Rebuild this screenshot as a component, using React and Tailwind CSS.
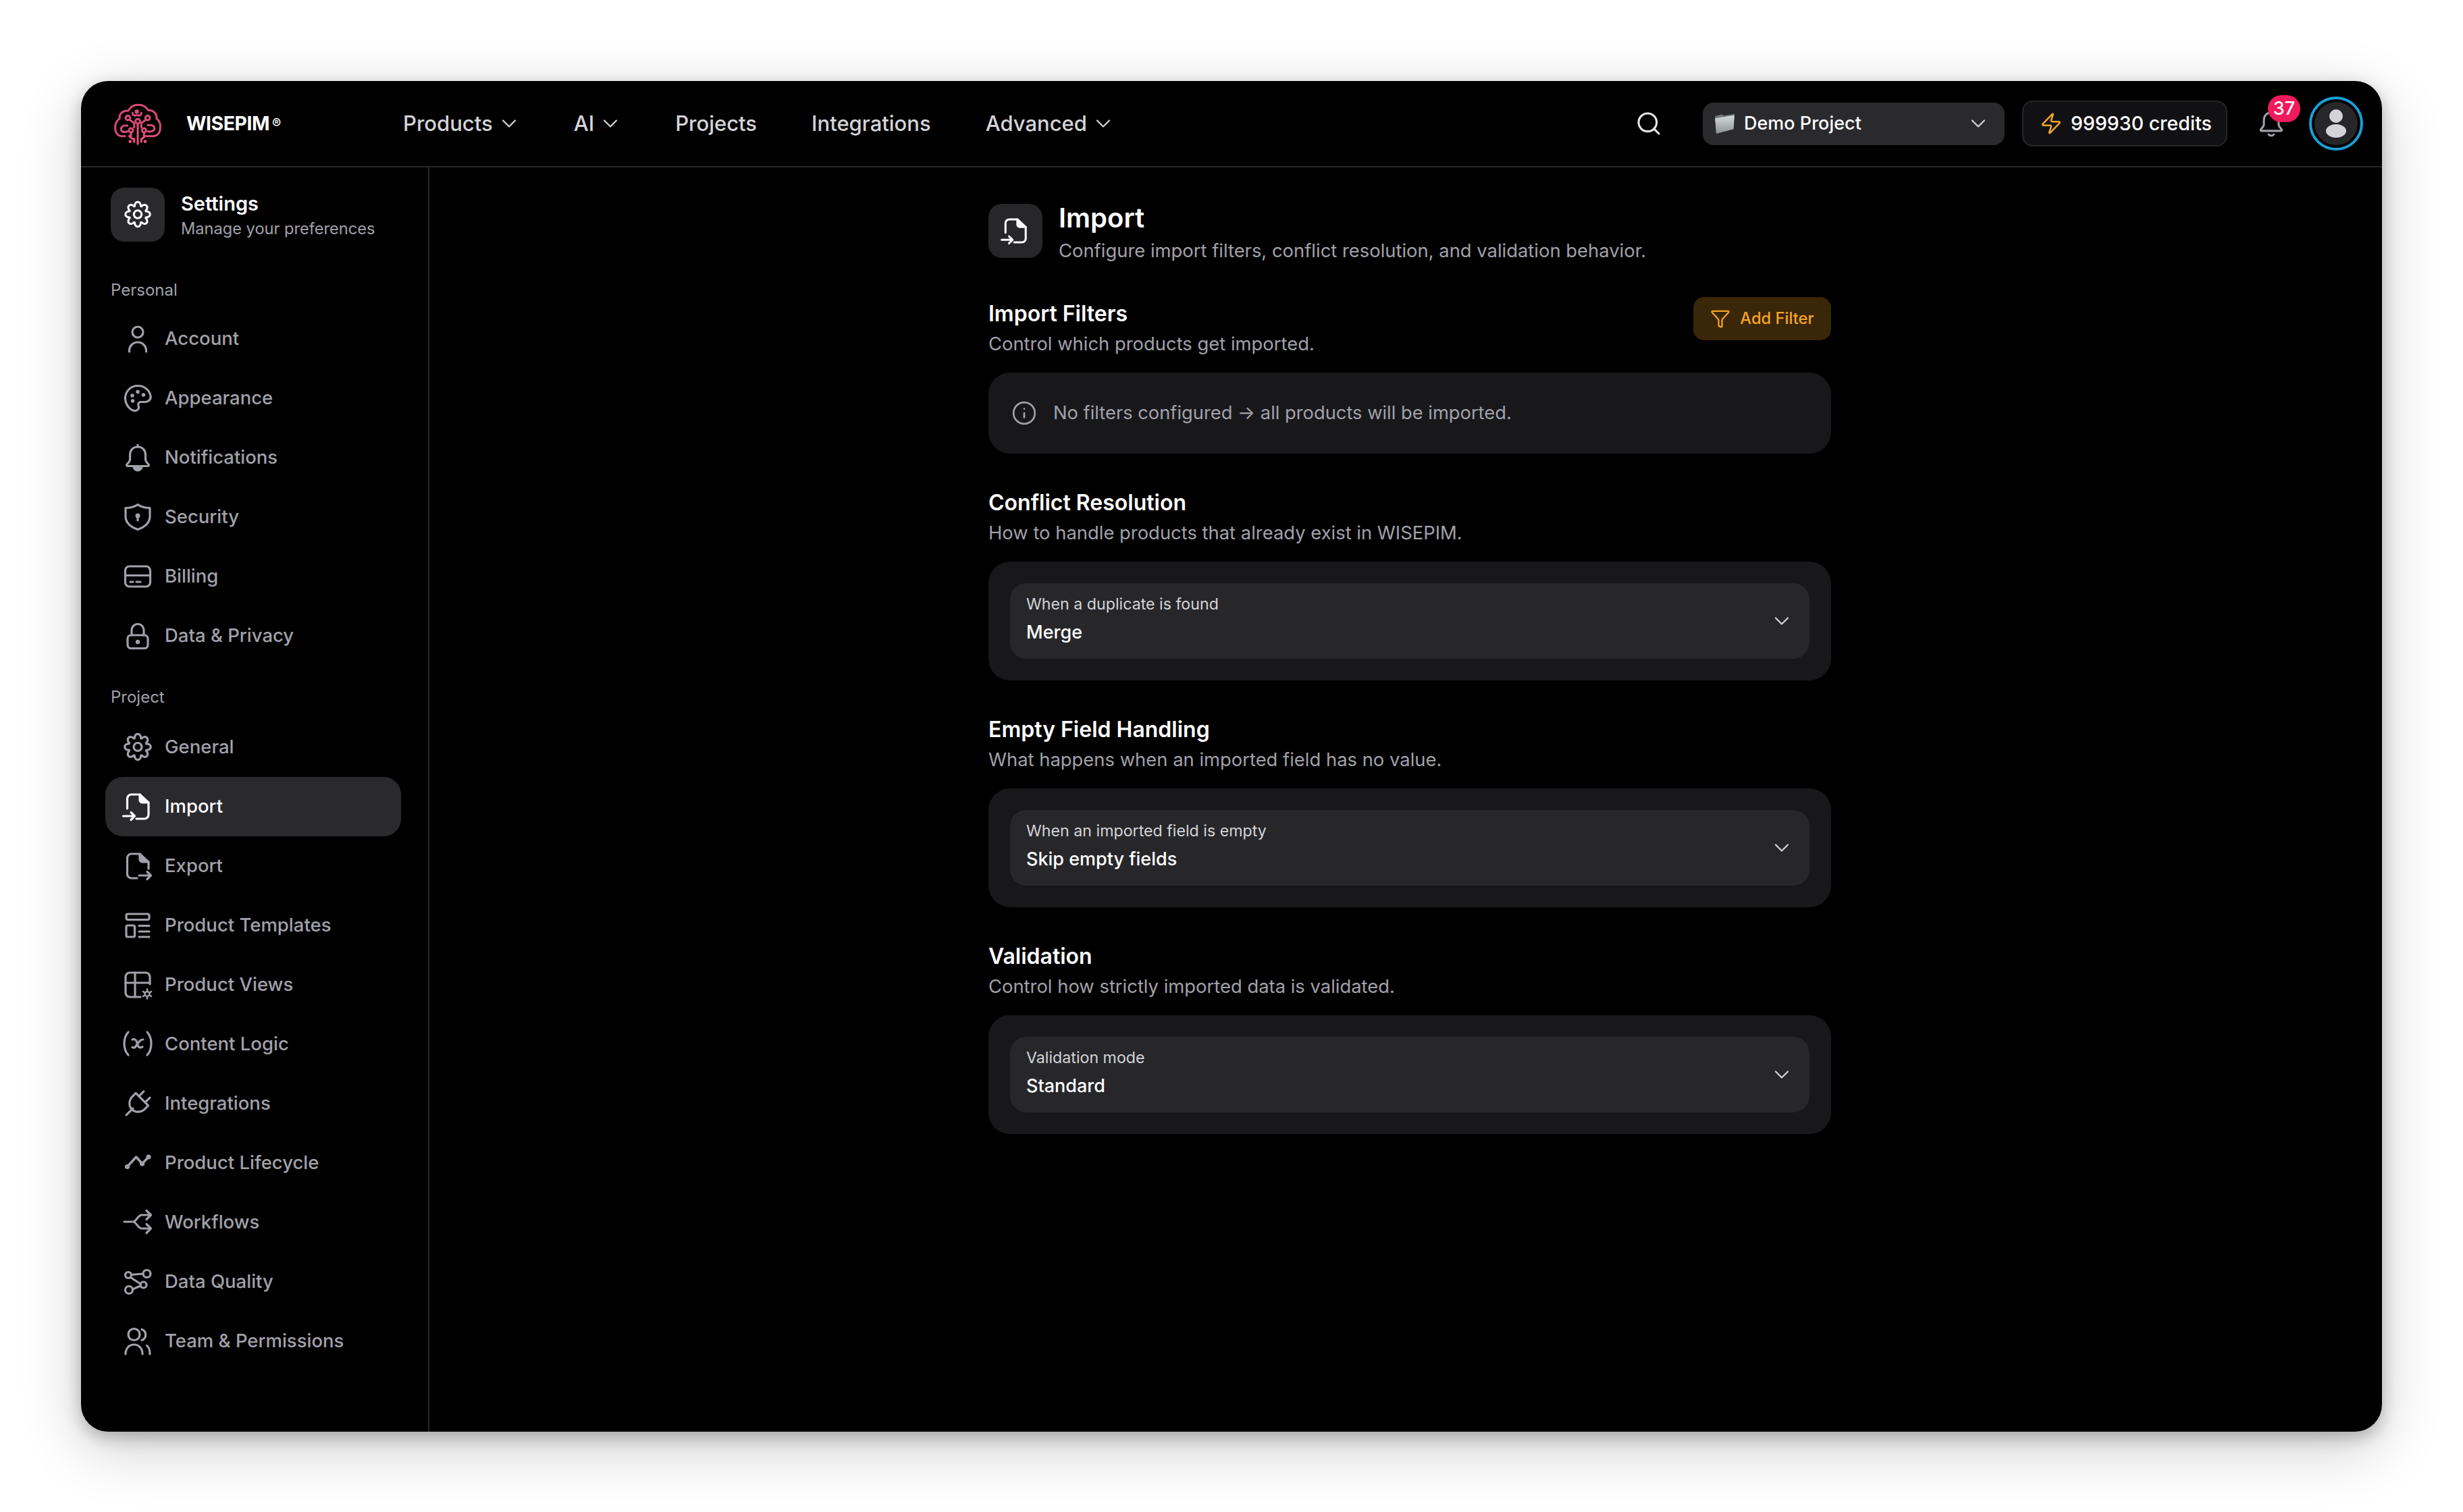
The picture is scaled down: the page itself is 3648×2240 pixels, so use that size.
import { ChevronDown, Search, Zap, Funnel, Info } from 'lucide-react';

// every sidebar icon sits in a 40x40 box, strokes are about 3px like the reference
function NavIcon({ children, className = '' }) {
  return (
    <svg
      viewBox="0 0 40 40"
      fill="none"
      stroke="currentColor"
      strokeWidth="3.2"
      strokeLinecap="round"
      strokeLinejoin="round"
      className={`w-10 h-10 shrink-0 overflow-visible ${className}`}
      aria-hidden="true"
    >
      {children}
    </svg>
  );
}

function GearIcon({ className = '' }) {
  // cog with eight stubby teeth
  const n = 8;
  const cx = 20;
  const cy = 19.5;
  const step = Math.PI / n;
  const p = (r, t) => `${(cx + r * Math.cos(t)).toFixed(1)} ${(cy + r * Math.sin(t)).toFixed(1)}`;
  let d = '';
  for (let i = 0; i < n; i++) {
    const a = (i / n) * Math.PI * 2 - Math.PI / 2;
    d += `${i === 0 ? 'M' : 'L'}${p(13.6, a - step * 0.9)} C${p(17, a - step * 0.75)} ${p(19.6, a - step * 0.35)} ${p(19.2, a)} C${p(19.6, a + step * 0.35)} ${p(17, a + step * 0.75)} ${p(13.6, a + step * 0.9)} `;
  }
  d += 'Z';
  return (
    <NavIcon className={className}>
      <path d={d} />
      <circle cx="20" cy="19.5" r="6" />
    </NavIcon>
  );
}

function ImportIcon({ className = '' }) {
  return (
    <NavIcon className={className}>
      <path d="M4.5 23V8a6 6 0 0 1 6-6H23L36 14V32a6 6 0 0 1-6 6H18" />
      <path d="M23 2v8a4 4 0 0 0 4 4H36" fill="currentColor" />
      <path d="M-1.5 34H15M10 28.5L15.5 34L10 39.5" />
    </NavIcon>
  );
}

const icons = {
  account: (
    <NavIcon>
      <circle cx="20" cy="10" r="8" />
      <path d="M7.5 39v-1.5a12.5 12.5 0 0 1 25 0V39" />
    </NavIcon>
  ),
  appearance: (
    <NavIcon>
      <path d="M20 1.5C9.5 1.5 1.5 10 1.5 20S9.5 38.5 16 38.5c3.5 0 5.5-2.5 5.5-5 0-1.5-.8-2.5-.8-4 0-2.5 2-4 4.5-4h5.5c4.5 0 8.5-3 8.5-7.5C38.5 9 30.5 1.5 20 1.5Z" />
      <circle cx="12" cy="16" r="2.8" fill="currentColor" stroke="none" />
      <circle cx="20" cy="10.5" r="2.8" fill="currentColor" stroke="none" />
      <circle cx="28.5" cy="15" r="2.8" fill="currentColor" stroke="none" />
      <circle cx="12.5" cy="24" r="2.8" fill="currentColor" stroke="none" />
    </NavIcon>
  ),
  notifications: (
    <NavIcon>
      <path d="M20 4C13 4 8.5 9 8.5 16v7c0 2.5-2.5 4.5-4.5 7-1 1.2-.5 2.5 1 2.5h30c1.5 0 2-1.3 1-2.5-2-2.5-4.5-4.5-4.5-7v-7C31.5 9 27 4 20 4Z" />
      <path d="M20 1v3" />
      <path d="M14 33a6 6 0 0 0 12 0Z" fill="currentColor" />
    </NavIcon>
  ),
  security: (
    <NavIcon>
      <path d="M20 1.5C25 5 31 6.5 38 6.5V19C38 30 28 36 20 38.5 12 36 2 30 2 19V6.5C9 6.5 15 5 20 1.5Z" />
      <circle cx="20" cy="18" r="3.5" fill="currentColor" stroke="none" />
      <path d="M20 19v6" />
    </NavIcon>
  ),
  billing: (
    <NavIcon>
      <rect x="1.5" y="5" width="37" height="30" rx="6" />
      <path d="M1.5 18.5h37M9 28h4M18 28h6" />
    </NavIcon>
  ),
  privacy: (
    <NavIcon>
      <rect x="5" y="19" width="30" height="19.5" rx="5" />
      <path d="M11 19v-7.5a9 9 0 0 1 18 0V19" />
      <circle cx="20" cy="29" r="3.2" fill="currentColor" stroke="none" />
    </NavIcon>
  ),
  general: <GearIcon />,
  import: <ImportIcon />,
  export: (
    <NavIcon>
      <path d="M36 24V14L23 2H10.5a6 6 0 0 0-6 6V32a6 6 0 0 0 6 6H19" />
      <path d="M23 2v8a4 4 0 0 0 4 4H36" fill="currentColor" />
      <path d="M22 34H39M34 28.5L39.5 34L34 39.5" />
    </NavIcon>
  ),
  templates: (
    <NavIcon>
      <rect x="3" y="3" width="34" height="8.5" rx="2.5" />
      <rect x="3" y="20" width="12.5" height="17" rx="2" />
      <path d="M22 20.5H37M22 29H37M22 37H37" />
    </NavIcon>
  ),
  views: (
    <NavIcon>
      <path d="M38 19V8a6 6 0 0 0-6-6H8a6 6 0 0 0-6 6V32a6 6 0 0 0 6 6H24" />
      <path d="M2 17H38M16 2V38" />
      <circle cx="34" cy="33.5" r="3.5" strokeWidth="2.5" />
      <path d="M34 26.5v2M34 38.5v2M27.9 30l1.7 1M38.4 36l1.7 1M27.9 37l1.7-1M38.4 31l1.7-1" strokeWidth="2.5" />
    </NavIcon>
  ),
  logic: (
    <NavIcon>
      <path d="M6 2C1.5 7 0 12.5 0 19s1.5 12 6 17M34 2C38.5 7 40 12.5 40 19s-1.5 12-6 17" />
      <path d="M12 13c3.5-1 5.5 0 6.5 3.5l1.5 5c1 3.5 3.5 4 7 2.5M28 13c-3.5 0-5 2-8 6l-3.5 5c-1.5 1.5-3 1.5-4.5.5" />
    </NavIcon>
  ),
  integrations: (
    <NavIcon>
      <g transform="rotate(45 20 20)">
        <path d="M20 30V44" />
        <path d="M13.5 11V1M26.5 11V1" />
        <path d="M7 11H33V18A11 12 0 0 1 7 18Z" />
      </g>
    </NavIcon>
  ),
  lifecycle: (
    <NavIcon>
      <path d="M4.5 25.5L17.7 11L26.6 21L36 11" strokeWidth="3.5" />
      <circle cx="4.5" cy="25.5" r="3.6" fill="currentColor" stroke="none" />
      <circle cx="26.6" cy="21" r="3.6" fill="currentColor" stroke="none" />
      <circle cx="36" cy="11" r="3.6" fill="currentColor" stroke="none" />
    </NavIcon>
  ),
  workflows: (
    <NavIcon>
      <path d="M0 19H13C18 19 20 9 26 9H39M13 19C18 19 20 29 26 29H39" />
      <path d="M33 2.5L39.5 9L33 15.5M33 22.5L39.5 29L33 35.5" />
    </NavIcon>
  ),
  quality: (
    <NavIcon>
      <circle cx="6" cy="10" r="4.5" />
      <circle cx="33.5" cy="8" r="5.5" />
      <circle cx="7" cy="32" r="5.5" />
      <circle cx="28.5" cy="24.5" r="4.5" />
      <path d="M10.5 9.5L28 8M9.5 13.5L24 23M12.5 31L24 26" />
    </NavIcon>
  ),
  team: (
    <NavIcon>
      <circle cx="14.5" cy="10" r="8.5" />
      <path d="M26 2.5a8.5 8.5 0 0 1 0 16" />
      <path d="M2 39c0-8 5-14 12.5-14S27 31 27 39" />
      <path d="M33.5 26.5c3 2 4.5 7 4.5 12.5" />
    </NavIcon>
  ),
};

const personal = [
  ['Account', 'account'],
  ['Appearance', 'appearance'],
  ['Notifications', 'notifications'],
  ['Security', 'security'],
  ['Billing', 'billing'],
  ['Data & Privacy', 'privacy'],
];

const project = [
  ['General', 'general'],
  ['Import', 'import', true],
  ['Export', 'export'],
  ['Product Templates', 'templates'],
  ['Product Views', 'views'],
  ['Content Logic', 'logic'],
  ['Integrations', 'integrations'],
  ['Product Lifecycle', 'lifecycle'],
  ['Workflows', 'workflows'],
  ['Data Quality', 'quality'],
  ['Team & Permissions', 'team'],
];

function Logo() {
  return (
    <svg viewBox="0 0 330 270" className="w-[110px] h-[90px] -ml-[19px]" fill="none" strokeLinecap="round" strokeLinejoin="round" aria-hidden="true">
      <g stroke="#d94a78" strokeWidth="9">
        <path d="M105 191H90C70 191 60 170 62 150C62 132 72 120 82 112C78 95 95 75 120 78C130 60 148 52 165 52C185 52 200 62 208 76C232 74 250 95 245 112C255 120 265 135 262 155C262 175 250 191 232 191H195" />
        <path d="M162 136V226" stroke="#e8507f" />
        <circle cx="162" cy="125" r="10" />
        <circle cx="118" cy="110" r="10" />
        <circle cx="206" cy="110" r="10" />
        <path d="M125 118L146 133V152M199 118L178 133V152" />
        <path d="M139 88C139 100 150 102 158 97C166 102 178 100 178 88" />
        <circle cx="158" cy="82" r="5" />
        <path d="M116 144H106C92 144 88 155 88 160C88 170 98 176 118 170" />
        <path d="M206 142H216C232 142 238 150 236 160C232 172 220 172 206 170" />
        <circle cx="132" cy="165" r="9" />
        <circle cx="190" cy="165" r="9" />
        <path d="M132 175V200L146 204V216M190 175V196L178 204V216" stroke="#e8507f" />
      </g>
      <circle cx="126" cy="191" r="6" fill="#e8507f" />
      <circle cx="128" cy="215" r="7" fill="#e8507f" />
      <circle cx="195" cy="215" r="7" fill="#e8507f" />
    </svg>
  );
}

function FolderEmoji() {
  return (
    <svg viewBox="0 0 93 90" className="w-[31px] h-[30px] shrink-0" aria-hidden="true">
      <defs>
        <linearGradient id="folderFront" x1="0" y1="0" x2="0" y2="1">
          <stop offset="0" stopColor="#d5dadb" />
          <stop offset="1" stopColor="#8d9394" />
        </linearGradient>
      </defs>
      <path d="M4 12L34 4L42 10L90 2L84 68L8 88Z" fill="#6f7475" />
      <path d="M3 22L90 8L86 70L10 90Z" fill="url(#folderFront)" />
    </svg>
  );
}

function NavLink({ label, chevron }) {
  return (
    <button className="flex items-center text-[31px] font-medium text-[#d4d4d8]">
      {label}
      {chevron && <ChevronDown className="ml-[6px] -mr-[3px] w-[36px] h-[36px]" strokeWidth={1.5} />}
    </button>
  );
}

function Header() {
  return (
    <header className="h-[128px] shrink-0 flex items-center border-b-2 border-[#27272a] pl-[49px] pr-[28px]">
      <div className="flex items-center w-[428px]">
        <Logo />
        <span className="ml-[16px] text-[28.5px] font-bold text-white tracking-[-0.5px]">WISEPIM</span>
        <span className="ml-[4px] text-[20px] font-bold text-white">®</span>
      </div>
      <nav className="flex items-center gap-[81px]">
        <NavLink label="Products" chevron />
        <NavLink label="AI" chevron />
        <NavLink label="Projects" />
        <NavLink label="Integrations" />
        <NavLink label="Advanced" chevron />
      </nav>
      <div className="ml-auto flex items-center">
        <Search className="w-10 h-10 text-[#e4e4e7]" strokeWidth={1.9} />
        <button className="ml-[60px] w-[447px] h-[63px] rounded-[16px] bg-[#2a2a2d] flex items-center pl-[17px] pr-[21px] text-[27px] font-medium text-white">
          <FolderEmoji />
          <span className="ml-[13px]">Demo Project</span>
          <ChevronDown className="ml-auto w-[36px] h-[36px] text-[#d4d4d8]" strokeWidth={1.5} />
        </button>
        <button className="ml-[26px] w-[304px] h-[68px] rounded-[16px] bg-[#111113] border-2 border-[#27272a] flex items-center pl-[24px] text-[28.5px] font-medium text-white">
          <Zap className="w-[34px] h-[38px] text-[#eea52c]" strokeWidth={1.8} />
          <span className="ml-[12px]">999930 credits</span>
        </button>
        <div className="relative ml-[46px] w-[38px] h-[44px] text-[#a1a1aa]">
          <NavIcon className="!w-[38px] !h-[42px]">
            <path d="M20 4C13 4 8.5 9 8.5 16v7c0 2.5-2.5 4.5-4.5 7-1 1.2-.5 2.5 1 2.5h30c1.5 0 2-1.3 1-2.5-2-2.5-4.5-4.5-4.5-7v-7C31.5 9 27 4 20 4Z" />
            <path d="M16 38a5 5 0 0 0 8 0" />
          </NavIcon>
          <span className="absolute -top-[20px] left-[14px] w-[48px] h-[40px] rounded-full bg-[#f01a5c] text-white text-[27px] font-medium leading-[40px] text-center">37</span>
        </div>
        <div className="ml-[37px] w-[80px] h-[80px] rounded-full border-4 border-[#1a9fd8] bg-black p-[4px] shrink-0">
          <div className="w-full h-full rounded-full bg-[#27272a] flex flex-col items-center justify-center gap-[2px]">
            <span className="w-[20px] h-[20px] rounded-full bg-[#d4d4d8]" />
            <span className="w-[30px] h-[20px] rounded-[50%] bg-[#d4d4d8]" />
          </div>
        </div>
      </div>
    </header>
  );
}

function SideItem({ label, icon, active }) {
  return (
    <a className={`h-[88px] flex items-center gap-[20px] pl-[28px] rounded-[26px] text-[27.5px] font-medium ${active ? 'bg-[#2a2a2d] text-white' : 'text-[#a1a1aa]'}`}>
      {icons[icon]}
      {label}
    </a>
  );
}

function Sidebar() {
  return (
    <aside className="w-[516px] shrink-0 border-r-2 border-[#27272a] pt-[30px] pl-[36px] pr-[40px]">
      <div className="flex items-center pl-[8px] gap-[24px]">
        <div className="w-20 h-20 rounded-[20px] bg-[#2a2a2d] flex items-center justify-center text-white">
          <GearIcon className="!w-[38px] !h-[38px]" />
        </div>
        <div>
          <div className="text-[29px] font-semibold text-white leading-[42px]">Settings</div>
          <div className="text-[23.6px] text-[#a1a1aa] leading-[32px]">Manage your preferences</div>
        </div>
      </div>
      <div className="mt-[54px] pl-[8px] text-[24px] text-[#a1a1aa] leading-[36px]">Personal</div>
      <div className="mt-[10px]">
        {personal.map(([label, icon]) => (
          <SideItem key={label} label={label} icon={icon} />
        ))}
      </div>
      <div className="mt-[29px] pl-[8px] text-[24px] text-[#a1a1aa] leading-[36px]">Project</div>
      <div className="mt-[12px]">
        {project.map(([label, icon, active]) => (
          <SideItem key={label} label={label} icon={icon} active={active} />
        ))}
      </div>
    </aside>
  );
}

function SectionTitle({ title, sub }) {
  return (
    <div>
      <h3 className="text-[32px] font-semibold text-white leading-[44px]">{title}</h3>
      <p className="text-[27.4px] text-[#a1a1aa] leading-[44px]">{sub}</p>
    </div>
  );
}

function SelectCard({ title, sub, label, value }) {
  return (
    <section className="mt-[51px]">
      <SectionTitle title={title} sub={sub} />
      <div className="mt-[21px] rounded-[32px] bg-[#18181b] p-[32px]">
        <button className="w-full h-[112px] rounded-[24px] bg-[#27272a] flex items-center justify-between pl-[24px] pr-[23px] text-left">
          <span className="pb-[8px]">
            <span className="block text-[23.2px] text-[#d4d4d8] leading-[36px] mb-[6px]">{label}</span>
            <span className="block text-[27px] font-medium text-white leading-[36px]">{value}</span>
          </span>
          <ChevronDown className="w-[36px] h-[36px] text-[#d4d4d8]" strokeWidth={1.5} />
        </button>
      </div>
    </section>
  );
}

function Main() {
  return (
    <main className="flex-1 flex justify-center pl-[12px] pt-[54px]">
      <div className="w-[1248px]">
        <div className="flex gap-[24px]">
          <div className="w-20 h-20 rounded-[20px] bg-[#27272a] flex items-center justify-center text-white">
            <ImportIcon className="!w-[38px] !h-[38px]" />
          </div>
          <div>
            <h1 className="text-[40px] font-semibold text-white leading-[42px]">Import</h1>
            <p className="mt-[5px] text-[27.4px] text-[#a1a1aa] leading-[44px]">
              Configure import filters, conflict resolution, and validation behavior.
            </p>
          </div>
        </div>

        <section className="mt-[50px]">
          <div className="flex justify-between items-start">
            <SectionTitle title="Import Filters" sub="Control which products get imported." />
            <button className="-mt-[3px] w-[204px] h-[64px] rounded-[16px] bg-[#3a2608] flex items-center justify-center gap-[14px] text-[23.7px] font-medium text-[#f5a524]">
              <Funnel className="w-[30px] h-[30px]" strokeWidth={1.8} />
              Add Filter
            </button>
          </div>
          <div className="mt-[21px] h-[120px] rounded-[32px] bg-[#18181b] flex items-center pl-[34px] gap-[24px] text-[27.3px] text-[#a1a1aa]">
            <Info className="w-[38px] h-[38px]" strokeWidth={1.7} />
            No filters configured → all products will be imported.
          </div>
        </section>

        <SelectCard
          title="Conflict Resolution"
          sub="How to handle products that already exist in WISEPIM."
          label="When a duplicate is found"
          value="Merge"
        />
        <SelectCard
          title="Empty Field Handling"
          sub="What happens when an imported field has no value."
          label="When an imported field is empty"
          value="Skip empty fields"
        />
        <SelectCard
          title="Validation"
          sub="Control how strictly imported data is validated."
          label="Validation mode"
          value="Standard"
        />
      </div>
    </main>
  );
}

export default function App() {
  return (
    <div className="min-h-[2240px] bg-white p-[120px] font-['Inter',sans-serif]">
      <div className="w-[3408px] h-[2001px] rounded-[40px] bg-black overflow-hidden flex flex-col shadow-[0_8px_24px_rgba(0,0,0,0.25),0_24px_90px_rgba(0,0,0,0.2)]">
        <Header />
        <div className="flex flex-1 min-h-0">
          <Sidebar />
          <Main />
        </div>
      </div>
    </div>
  );
}
